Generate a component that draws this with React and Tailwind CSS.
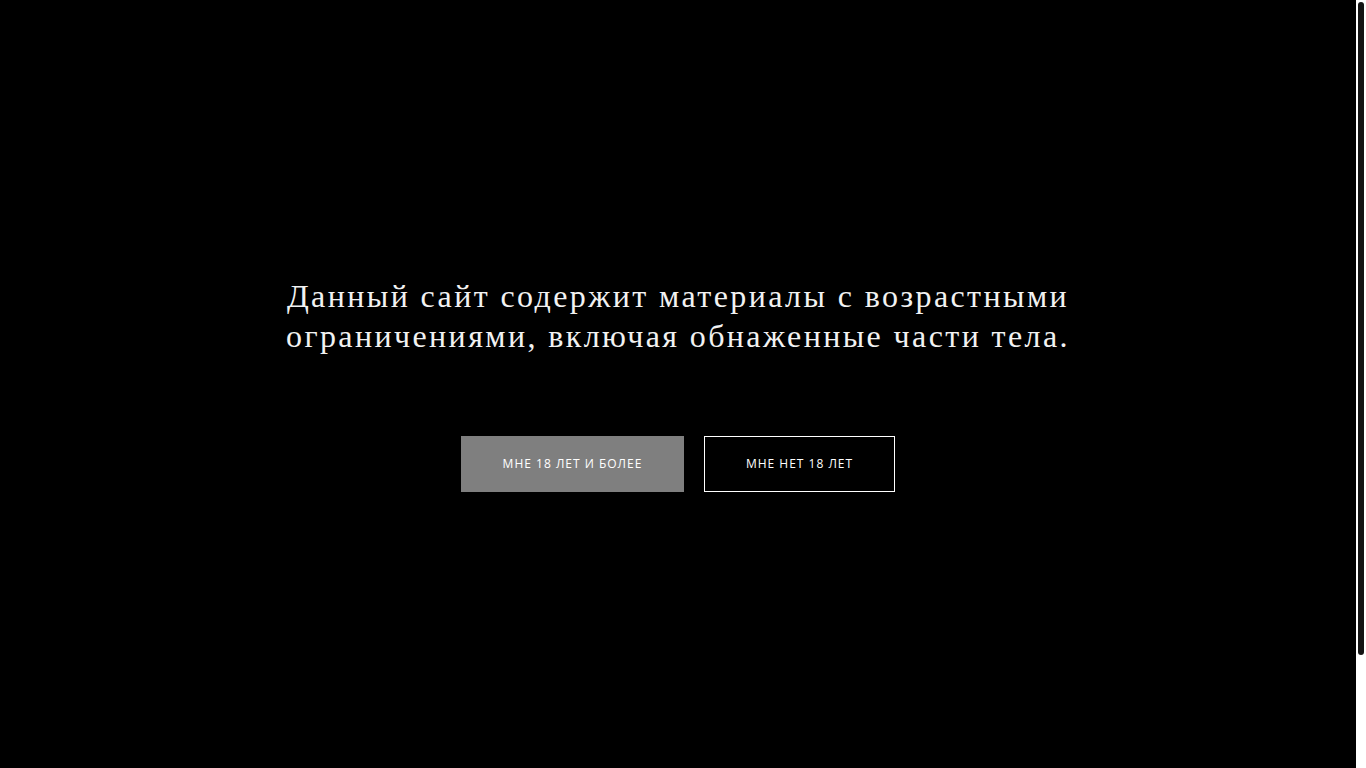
export default function App() {
	return (
		<div className="flex h-screen bg-black text-white overflow-hidden">
			<main className="flex flex-col items-center justify-center flex-1">
				<h1 className="font-['Liberation_Serif',serif] text-[32px] leading-[40px] tracking-[2.4px] text-center text-[#f2f2f2]">
					Данный сайт содержит материалы с возрастными<br />
					ограничениями, включая обнаженные части тела.
				</h1>
				<div className="flex items-center gap-5 mt-[80px]">
					<button className="flex items-center justify-center w-[223px] h-14 bg-[#7f7f7f] font-['Open_Sans',sans-serif] text-[12px] tracking-[1px] text-white uppercase">
						Мне 18 лет и более
					</button>
					<button className="flex items-center justify-center w-[191px] h-14 border border-white font-['Open_Sans',sans-serif] text-[12px] tracking-[1px] text-white uppercase">
						Мне нет 18 лет
					</button>
				</div>
			</main>
			{/* scrollbar strip */}
			<div className="flex flex-col w-[10px] h-full bg-white p-[2px]">
				<div className="h-[653px] w-full rounded-full bg-[#141414]" />
			</div>
		</div>
	);
}
